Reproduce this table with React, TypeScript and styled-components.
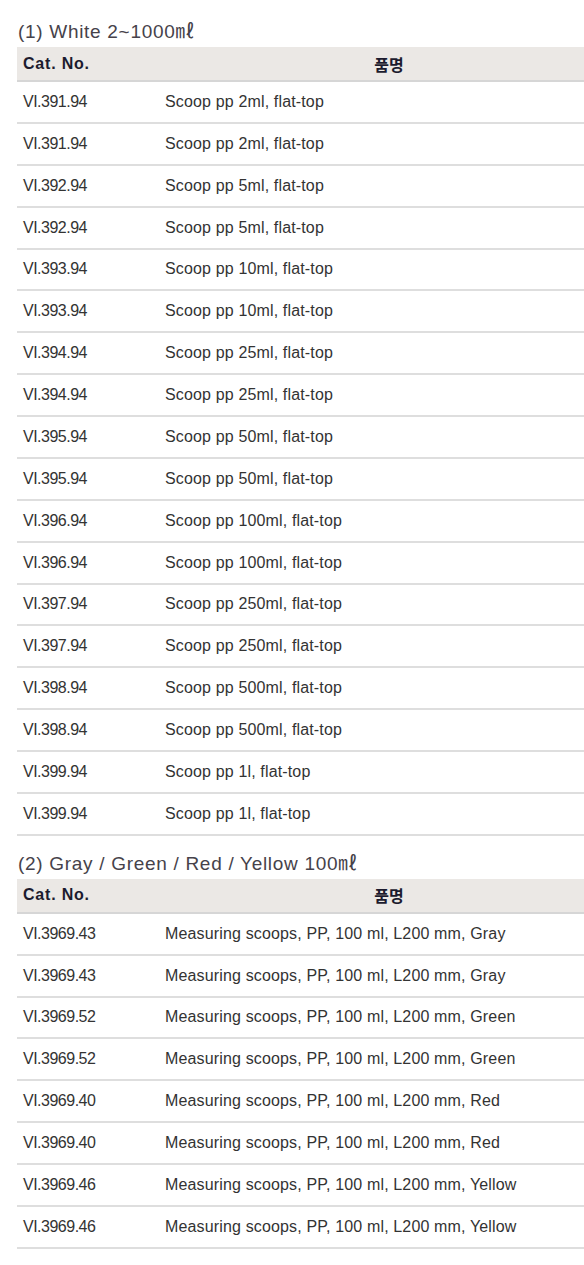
import React from 'react';
import styled, { createGlobalStyle } from 'styled-components';

type Item = {
  cat: string;
  name: string;
};

type SectionProps = {
  title: string;
  items: Item[];
};

const GlobalStyle = createGlobalStyle`
  html, body {
    margin: 0;
    padding: 0;
    background: #ffffff;
  }
`;

const Page = styled.div`
  display: flex;
  flex-direction: column;
  gap: 13px;
  padding: 17px 0 0 17px;
  font-family: 'Liberation Sans', 'Noto Sans CJK KR', sans-serif;
`;

const Title = styled.h3`
  color: #46424a;
  font-size: 19px;
  font-weight: normal;
  height: 30px;
  letter-spacing: 0.7px;
  line-height: 30px;
  margin: 0;
  padding-left: 1px;
`;

const Table = styled.div`
  display: flex;
  flex-direction: column;
`;

const HeadRow = styled.div`
  align-items: center;
  background: #ebe8e5;
  border-bottom: 2px solid #d6d6d6;
  display: grid;
  grid-template-columns: 142px 1fr;
  height: 33px;
`;

// the name header sits centred on the full (wider than window) column of the original table
const HeadCell = styled.div<{ $center?: boolean }>`
  color: #1c1b2e;
  font-size: 16px;
  font-weight: bold;
  letter-spacing: ${(p) => (p.$center ? '0' : '0.8px')};
  padding-left: ${(p) => (p.$center ? '35px' : '6px')};
  text-align: ${(p) => (p.$center ? 'center' : 'left')};
`;

const Row = styled.div`
  align-items: center;
  border-bottom: 2px solid #dedede;
  display: grid;
  grid-template-columns: 142px 1fr;
  height: 39.88px;
`;

const Cell = styled.div<{ $code?: boolean }>`
  color: #333333;
  font-size: 16px;
  letter-spacing: ${(p) => (p.$code ? '-0.5px' : '0.15px')};
  line-height: 20px;
  padding-left: 6px;
  white-space: nowrap;
`;

const whiteItems: Item[] = [
  ['VI.391.94', 'Scoop pp 2ml, flat-top'],
  ['VI.392.94', 'Scoop pp 5ml, flat-top'],
  ['VI.393.94', 'Scoop pp 10ml, flat-top'],
  ['VI.394.94', 'Scoop pp 25ml, flat-top'],
  ['VI.395.94', 'Scoop pp 50ml, flat-top'],
  ['VI.396.94', 'Scoop pp 100ml, flat-top'],
  ['VI.397.94', 'Scoop pp 250ml, flat-top'],
  ['VI.398.94', 'Scoop pp 500ml, flat-top'],
  ['VI.399.94', 'Scoop pp 1l, flat-top'],
].flatMap(([cat, name]) => [
  { cat, name },
  { cat, name },
]);

const colorItems: Item[] = [
  ['VI.3969.43', 'Gray'],
  ['VI.3969.52', 'Green'],
  ['VI.3969.40', 'Red'],
  ['VI.3969.46', 'Yellow'],
].flatMap(([cat, color]) => {
  const name = `Measuring scoops, PP, 100 ml, L200 mm, ${color}`;
  return [
    { cat, name },
    { cat, name },
  ];
});

const Section = ({ title, items }: SectionProps) => (
  <div>
    <Title>{title}</Title>
    <Table>
      <HeadRow>
        <HeadCell>Cat. No.</HeadCell>
        <HeadCell $center>품명</HeadCell>
      </HeadRow>
      {items.map((item, index) => (
        <Row key={index}>
          <Cell $code>{item.cat}</Cell>
          <Cell>{item.name}</Cell>
        </Row>
      ))}
    </Table>
  </div>
);

export default function App() {
  return (
    <>
      <GlobalStyle />
      <Page>
        <Section title="(1) White 2~1000㎖" items={whiteItems} />
        <Section title="(2) Gray / Green / Red / Yellow 100㎖" items={colorItems} />
      </Page>
    </>
  );
}
